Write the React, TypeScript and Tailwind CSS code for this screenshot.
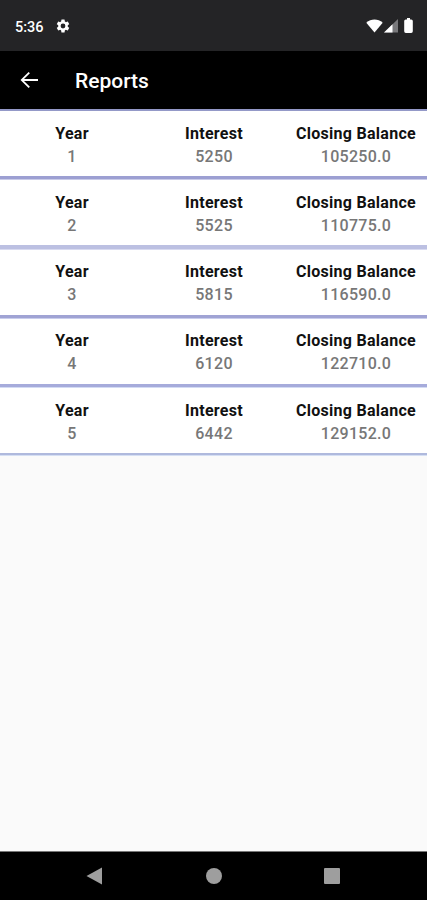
import { clsx } from 'clsx'

const rows = [
    { year: '1', interest: '5250', balance: '105250.0', line: 'border-b-[3px] border-b-[#9c9fd2]', edge: 'bg-[#c9cbe8]' },
    { year: '2', interest: '5525', balance: '110775.0', line: 'border-b-4 border-b-[#bcc0e2]', edge: 'bg-[#d8daf0]' },
    { year: '3', interest: '5815', balance: '116590.0', line: 'border-b-[3px] border-b-[#a0a3d4]', edge: 'bg-[#c9cdec]' },
    { year: '4', interest: '6120', balance: '122710.0', line: 'border-b-[3px] border-b-[#a6abdb]', edge: 'bg-[#d3dbf3]' },
    { year: '5', interest: '6442', balance: '129152.0', line: 'border-b-2 border-b-[#afb9dd]', edge: 'bg-[#d5dff3]' },
]

const StatusBar = () => (
    <div className="flex h-[51px] shrink-0 items-center bg-[#242426] pl-[15px] pr-[14px] pt-[2px] text-white">
        <span className="pt-[3px] text-[14.5px] font-medium leading-none">5:36</span>
        <svg className="mb-px ml-[11px] h-4 w-4" viewBox="0 0 24 24" fill="currentColor">
            <path d="M19.14 12.94c.04-.3.06-.61.06-.94s-.02-.64-.07-.94l2.03-1.58a.49.49 0 0 0 .12-.61l-1.92-3.32a.49.49 0 0 0-.59-.22l-2.39.96a7 7 0 0 0-1.62-.94l-.36-2.54a.48.48 0 0 0-.48-.41h-3.84a.47.47 0 0 0-.47.41l-.36 2.54c-.59.24-1.13.57-1.62.94l-2.39-.96a.48.48 0 0 0-.59.22L2.74 8.87a.47.47 0 0 0 .12.61l2.03 1.58c-.05.3-.09.63-.09.94s.02.64.07.94l-2.03 1.58a.49.49 0 0 0-.12.61l1.92 3.32c.12.22.37.29.59.22l2.39-.96c.5.38 1.03.7 1.62.94l.36 2.54c.05.24.24.41.48.41h3.84c.24 0 .44-.17.47-.41l.36-2.54a7 7 0 0 0 1.62-.94l2.39.96c.22.08.47 0 .59-.22l1.92-3.32a.47.47 0 0 0-.12-.61zM12 15.6a3.6 3.6 0 1 1 0-7.2 3.6 3.6 0 0 1 0 7.2z" />
        </svg>
        <div className="mb-[2px] ml-auto flex items-center">
            <svg className="h-[14px] w-[17px]" viewBox="0 0 17 14">
                <path d="M8.5 13.5 0.3 3.8C5 -0.5 12 -0.5 16.7 3.8z" fill="#fff" />
            </svg>
            <svg className="ml-px h-[14px] w-[14px]" viewBox="0 0 14 14">
                <path d="M14 0v13.5H0z" fill="#77777a" />
                <path d="M8.5 5.3v8.2H0z" fill="#fff" />
            </svg>
            <svg className="ml-[6px] h-[15px] w-[9px]" viewBox="0 0 9 15">
                <path d="M3 0h3v1.5h1.2Q8.8 1.5 8.8 3v10.3Q8.8 15 7.2 15H1.8Q.2 15 .2 13.3V3q0-1.5 1.6-1.5H3z" fill="#fff" />
            </svg>
        </div>
    </div>
)

const AppBar = () => (
    <header className="flex h-[58px] shrink-0 items-center bg-black pl-[17px] text-white">
        <svg className="h-6 w-6" viewBox="0 0 24 24" fill="currentColor">
            <path d="M21 11.1v1.8H7l5.9 5.9-1.3 1.3L3.5 12l8.1-8.1 1.3 1.3L7 11.1z" />
        </svg>
        <h1 className="ml-[34px] pt-[2px] text-[21px] font-medium leading-none">Reports</h1>
    </header>
)

const Cell = ({ label, value }: { label: string, value: string }) => (
    <div className="flex flex-1 flex-col items-center whitespace-nowrap text-[16px] leading-[23px]">
        <span className="font-bold tracking-[0.28px] text-[#111]">{label}</span>
        <span className="font-medium tracking-[0.3px] text-[#777]">{value}</span>
    </div>
)

export default function App() {
    return (
        <div className="flex h-[900px] w-[427px] flex-col overflow-hidden bg-[#fafafa] font-[Roboto,sans-serif]">
            <StatusBar />
            <AppBar />
            <main className="flex-1 border-b border-[#777]">
                <div className="border-t-2 border-[#9499c8]">
                    {rows.map((row) => (
                        <div key={row.year} className="flex h-[69.3px] flex-col last:h-[68px]">
                            <div className={clsx('flex flex-1 bg-white pl-px pt-[10.6px]', row.line)}>
                                <Cell label="Year" value={row.year} />
                                <Cell label="Interest" value={row.interest} />
                                <Cell label="Closing Balance" value={row.balance} />
                            </div>
                            <div className={clsx('h-px', row.edge)} />
                        </div>
                    ))}
                </div>
            </main>
            <nav className="flex h-[48px] shrink-0 items-center justify-between bg-black pl-[86px] pr-[87px]">
                <svg className="h-[18px] w-4" viewBox="0 0 16 18">
                    <path d="M16 .5v17L.5 9z" fill="#9e9e9e" />
                </svg>
                <div className="ml-px h-4 w-4 rounded-full bg-[#9e9e9e]" />
                <div className="h-4 w-4 rounded-[1px] bg-[#9e9e9e]" />
            </nav>
        </div>
    )
}
